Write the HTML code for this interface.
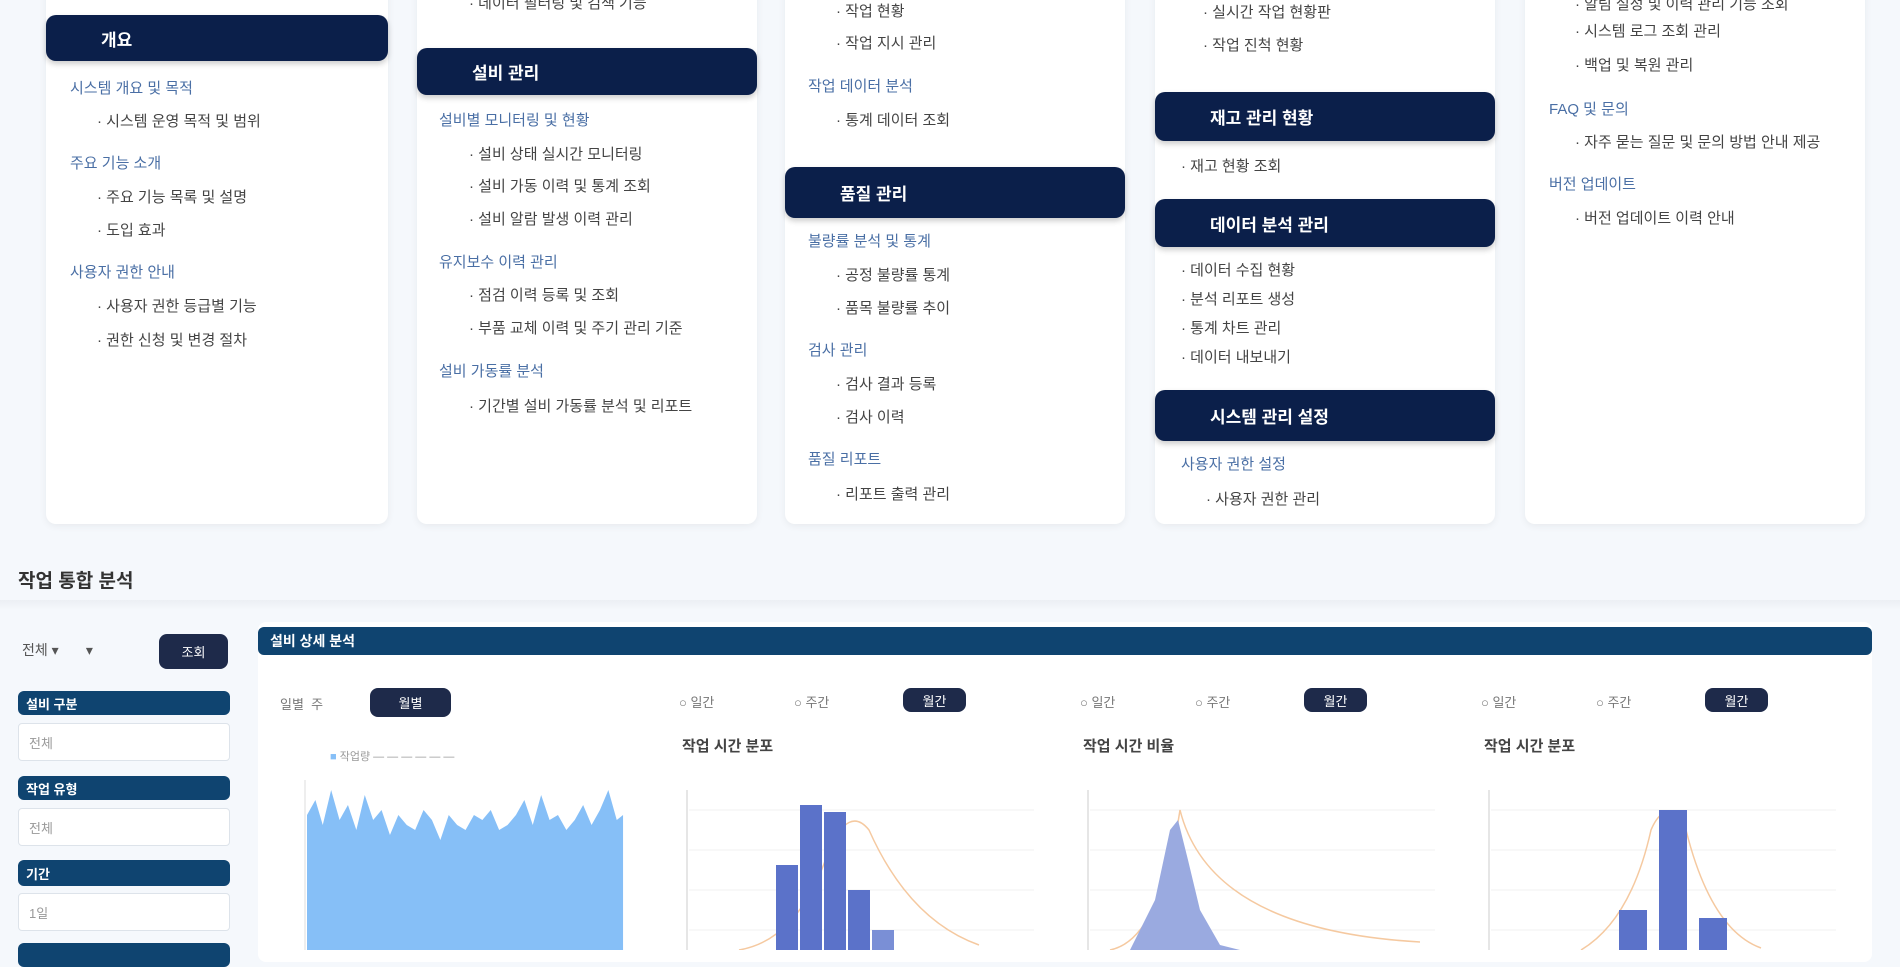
<!DOCTYPE html>
<html><head><meta charset="utf-8"><style>
*{margin:0;padding:0;box-sizing:border-box}
body{width:1900px;height:947px;overflow:hidden;background:#f5f8fc;font-family:"Liberation Sans","Noto Sans CJK KR",sans-serif;position:relative;color:#333}
.a{position:absolute;white-space:nowrap}
.card{position:absolute;top:-20px;height:544px;background:#fff;border-radius:10px;box-shadow:0 2px 8px rgba(0,0,0,.06)}
.hd{position:absolute;background:#0b1f4a;color:#fff;border-radius:10px;font-size:17px;font-weight:bold;padding-left:55px;display:flex;align-items:center;box-shadow:0 3px 6px rgba(0,0,0,.2)}
.sub{position:absolute;font-size:15px;color:#4a6fa5;white-space:nowrap}
.it{position:absolute;font-size:15px;color:#444;white-space:nowrap}
.bar{position:absolute;background:#0f4470;border-radius:6px;color:#fff;font-size:13px;font-weight:bold;padding-left:8px;display:flex;align-items:center}
.inp{position:absolute;background:#fff;border:1px solid #dde3ea;border-radius:4px;font-size:13px;color:#999;padding-left:10px;display:flex;align-items:center}
.pill{position:absolute;background:#1e2a4a;color:#fff;border-radius:8px;font-size:13px;display:flex;align-items:center;justify-content:center}
.tg{position:absolute;font-size:13px;color:#777;white-space:nowrap}
.ct{position:absolute;font-size:15px;font-weight:bold;color:#444}
</style></head><body>

<div class="card" style="left:46px;width:342px"></div>
<div class="card" style="left:417px;width:340px"></div>
<div class="card" style="left:785px;width:340px"></div>
<div class="card" style="left:1155px;width:340px"></div>
<div class="card" style="left:1525px;width:340px"></div>

<div class="hd" style="left:46px;top:15px;width:342px;height:46px">개요</div>
<div class="sub" style="left:70px;top:77px">시스템 개요 및 목적</div>
<div class="it" style="left:97px;top:110px">· 시스템 운영 목적 및 범위</div>
<div class="sub" style="left:70px;top:152px">주요 기능 소개</div>
<div class="it" style="left:97px;top:186px">· 주요 기능 목록 및 설명</div>
<div class="it" style="left:97px;top:219px">· 도입 효과</div>
<div class="sub" style="left:70px;top:261px">사용자 권한 안내</div>
<div class="it" style="left:97px;top:295px">· 사용자 권한 등급별 기능</div>
<div class="it" style="left:97px;top:329px">· 권한 신청 및 변경 절차</div>

<div class="it" style="left:469px;top:-8px">· 데이터 필터링 및 검색 기능</div>
<div class="hd" style="left:417px;top:48px;width:340px;height:47px">설비 관리</div>
<div class="sub" style="left:439px;top:109px">설비별 모니터링 및 현황</div>
<div class="it" style="left:469px;top:143px">· 설비 상태 실시간 모니터링</div>
<div class="it" style="left:469px;top:175px">· 설비 가동 이력 및 통계 조회</div>
<div class="it" style="left:469px;top:208px">· 설비 알람 발생 이력 관리</div>
<div class="sub" style="left:439px;top:251px">유지보수 이력 관리</div>
<div class="it" style="left:469px;top:284px">· 점검 이력 등록 및 조회</div>
<div class="it" style="left:469px;top:317px">· 부품 교체 이력 및 주기 관리 기준</div>
<div class="sub" style="left:439px;top:360px">설비 가동률 분석</div>
<div class="it" style="left:469px;top:395px">· 기간별 설비 가동률 분석 및 리포트</div>

<div class="it" style="left:836px;top:0px">· 작업 현황</div>
<div class="it" style="left:836px;top:32px">· 작업 지시 관리</div>
<div class="sub" style="left:808px;top:75px">작업 데이터 분석</div>
<div class="it" style="left:836px;top:109px">· 통계 데이터 조회</div>
<div class="hd" style="left:785px;top:167px;width:340px;height:51px">품질 관리</div>
<div class="sub" style="left:808px;top:230px">불량률 분석 및 통계</div>
<div class="it" style="left:836px;top:264px">· 공정 불량률 통계</div>
<div class="it" style="left:836px;top:297px">· 품목 불량률 추이</div>
<div class="sub" style="left:808px;top:339px">검사 관리</div>
<div class="it" style="left:836px;top:373px">· 검사 결과 등록</div>
<div class="it" style="left:836px;top:406px">· 검사 이력</div>
<div class="sub" style="left:808px;top:448px">품질 리포트</div>
<div class="it" style="left:836px;top:483px">· 리포트 출력 관리</div>

<div class="it" style="left:1203px;top:1px">· 실시간 작업 현황판</div>
<div class="it" style="left:1203px;top:34px">· 작업 진척 현황</div>
<div class="hd" style="left:1155px;top:92px;width:340px;height:49px">재고 관리 현황</div>
<div class="it" style="left:1181px;top:155px">· 재고 현황 조회</div>
<div class="hd" style="left:1155px;top:199px;width:340px;height:48px">데이터 분석 관리</div>
<div class="it" style="left:1181px;top:259px">· 데이터 수집 현황</div>
<div class="it" style="left:1181px;top:288px">· 분석 리포트 생성</div>
<div class="it" style="left:1181px;top:317px">· 통계 차트 관리</div>
<div class="it" style="left:1181px;top:346px">· 데이터 내보내기</div>
<div class="hd" style="left:1155px;top:390px;width:340px;height:51px">시스템 관리 설정</div>
<div class="sub" style="left:1181px;top:453px">사용자 권한 설정</div>
<div class="it" style="left:1206px;top:488px">· 사용자 권한 관리</div>

<div class="it" style="left:1575px;top:-7px">· 알림 설정 및 이력 관리 기능 조회</div>
<div class="it" style="left:1575px;top:20px">· 시스템 로그 조회 관리</div>
<div class="it" style="left:1575px;top:54px">· 백업 및 복원 관리</div>
<div class="sub" style="left:1549px;top:98px">FAQ 및 문의</div>
<div class="it" style="left:1575px;top:131px">· 자주 묻는 질문 및 문의 방법 안내 제공</div>
<div class="sub" style="left:1549px;top:173px">버전 업데이트</div>
<div class="it" style="left:1575px;top:207px">· 버전 업데이트 이력 안내</div>

<div class="a" style="left:18px;top:566px;font-size:19px;font-weight:bold;color:#333">작업 통합 분석</div>
<div class="a" style="left:0;top:600px;width:1900px;height:10px;background:linear-gradient(#eceff4,#f5f8fc)"></div>

<div class="a" style="left:22px;top:640px;font-size:14px;color:#555">전체 ▾&nbsp;&nbsp;&nbsp;&nbsp;&nbsp;&nbsp;&nbsp;▾</div>
<div class="pill" style="left:159px;top:634px;width:69px;height:35px">조회</div>
<div class="bar" style="left:18px;top:691px;width:212px;height:24px">설비 구분</div>
<div class="inp" style="left:18px;top:723px;width:212px;height:38px">전체</div>
<div class="bar" style="left:18px;top:776px;width:212px;height:24px">작업 유형</div>
<div class="inp" style="left:18px;top:808px;width:212px;height:38px">전체</div>
<div class="bar" style="left:18px;top:860px;width:212px;height:26px">기간</div>
<div class="inp" style="left:18px;top:893px;width:212px;height:38px">1일</div>
<div class="bar" style="left:18px;top:943px;width:212px;height:24px"></div>

<div class="a" style="left:258px;top:622px;width:1614px;height:340px;background:#fff;border-radius:8px"></div>
<div class="bar" style="left:258px;top:627px;width:1614px;height:28px;font-size:14px;padding-left:12px">설비 상세 분석</div>

<div class="tg" style="left:280px;top:694px">일별&nbsp;&nbsp;주</div>
<div class="pill" style="left:370px;top:688px;width:81px;height:29px">월별</div>
<div class="a" style="left:330px;top:748px;font-size:11px;color:#999"><span style="color:#86bff7">■</span> 작업량 — — — — — —</div>
<svg class="a" style="left:290px;top:770px" width="350" height="180">
<line x1="15" y1="10" x2="15" y2="180" stroke="#ddd"/>
<g transform="translate(17,0) scale(1.05,1) translate(-17,0)">
<path d="M17 180 L17 45 L25 30 L32 55 L40 20 L48 50 L56 35 L64 60 L72 25 L80 50 L88 40 L96 65 L104 45 L112 55 L120 60 L128 40 L136 50 L144 70 L152 45 L160 55 L168 60 L176 45 L184 50 L192 40 L200 60 L208 55 L216 45 L224 30 L232 55 L240 25 L248 50 L256 45 L264 60 L272 50 L280 35 L288 55 L296 40 L304 20 L312 50 L318 45 L318 180 Z" fill="#86bff7"/>
</g>
</svg>

<div class="tg" style="left:679px;top:692px">○ 일간</div>
<div class="tg" style="left:794px;top:692px">○ 주간</div>
<div class="pill" style="left:903px;top:688px;width:63px;height:24px">월간</div>
<div class="ct" style="left:682px;top:735px">작업 시간 분포</div>
<svg class="a" style="left:679px;top:790px" width="360" height="160">
<line x1="8" y1="0" x2="8" y2="160" stroke="#ccc"/>
<g stroke="#f0f0f0"><line x1="10" y1="20" x2="355" y2="20"/><line x1="10" y1="60" x2="355" y2="60"/><line x1="10" y1="100" x2="355" y2="100"/><line x1="10" y1="140" x2="355" y2="140"/></g>
<path d="M60 160 Q120 150 150 60 Q170 15 190 40 Q230 130 300 155" stroke="#f5c9a0" fill="none" stroke-width="1.5"/>
<rect x="97" y="75" width="22" height="85" fill="#5b72c9"/>
<rect x="121" y="15" width="22" height="145" fill="#5b72c9"/>
<rect x="145" y="22" width="22" height="138" fill="#5b72c9"/>
<rect x="169" y="100" width="22" height="60" fill="#5b72c9"/>
<rect x="193" y="140" width="22" height="20" fill="#7a8fd6"/>
</svg>

<div class="tg" style="left:1080px;top:692px">○ 일간</div>
<div class="tg" style="left:1195px;top:692px">○ 주간</div>
<div class="pill" style="left:1304px;top:688px;width:63px;height:24px">월간</div>
<div class="ct" style="left:1083px;top:735px">작업 시간 비율</div>
<svg class="a" style="left:1080px;top:790px" width="360" height="160">
<line x1="8" y1="0" x2="8" y2="160" stroke="#ccc"/>
<g stroke="#f0f0f0"><line x1="10" y1="20" x2="355" y2="20"/><line x1="10" y1="60" x2="355" y2="60"/><line x1="10" y1="100" x2="355" y2="100"/><line x1="10" y1="140" x2="355" y2="140"/></g>
<path d="M30 160 Q80 150 100 20 Q130 140 340 152" stroke="#f5c9a0" fill="none" stroke-width="1.5"/>
<path d="M50 160 L75 110 L90 40 L98 30 L108 70 L120 120 L140 155 L160 160 Z" fill="#9aaae0"/>
</svg>

<div class="tg" style="left:1481px;top:692px">○ 일간</div>
<div class="tg" style="left:1596px;top:692px">○ 주간</div>
<div class="pill" style="left:1705px;top:688px;width:63px;height:24px">월간</div>
<div class="ct" style="left:1484px;top:735px">작업 시간 분포</div>
<svg class="a" style="left:1481px;top:790px" width="360" height="160">
<line x1="8" y1="0" x2="8" y2="160" stroke="#ccc"/>
<g stroke="#f0f0f0"><line x1="10" y1="20" x2="355" y2="20"/><line x1="10" y1="60" x2="355" y2="60"/><line x1="10" y1="100" x2="355" y2="100"/><line x1="10" y1="140" x2="355" y2="140"/></g>
<path d="M100 160 Q150 130 170 40 Q185 5 205 40 Q230 140 280 158" stroke="#f5c9a0" fill="none" stroke-width="1.5"/>
<rect x="138" y="120" width="28" height="40" fill="#5b72c9"/>
<rect x="178" y="20" width="28" height="140" fill="#5b72c9"/>
<rect x="218" y="128" width="28" height="32" fill="#5b72c9"/>
</svg>

</body></html>
